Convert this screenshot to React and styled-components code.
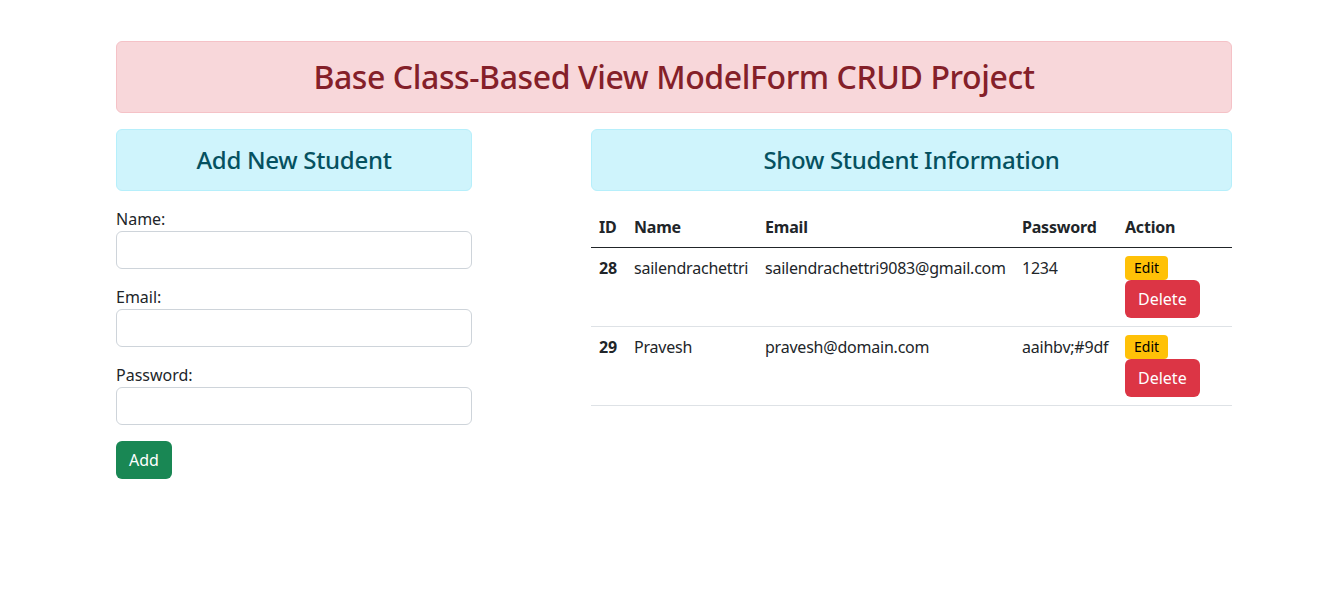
import React from "react";
import styled, { createGlobalStyle } from "styled-components";

const GlobalStyle = createGlobalStyle`
  * { box-sizing: border-box; }
  body {
    margin: 0;
    background: #fff;
    color: #212529;
    font-family: "Noto Sans", "Open Sans", sans-serif;
    font-size: 16px;
    line-height: 1.5;
  }
`;

const Container = styled.div`
  width: 1116px;
  margin: 41px 0 0 116px;
`;

const Alert = styled.div`
  padding: 16px;
  margin-bottom: 16px;
  border: 1px solid ${(p) => (p.$variant === "danger" ? "#f5c2c7" : "#b6effb")};
  border-radius: 6px;
  background: ${(p) => (p.$variant === "danger" ? "#f8d7da" : "#cff4fc")};
  color: ${(p) => (p.$variant === "danger" ? "#842029" : "#055160")};
  text-align: center;
`;

const Title = styled.h2`
  margin: 0;
  font-size: ${(p) => (p.$small ? "24px" : "32px")};
  line-height: ${(p) => (p.$small ? "28px" : "38px")};
  font-weight: 500;
  letter-spacing: ${(p) => (p.$small ? "-0.3px" : "-0.4px")};
`;

const Row = styled.div`
  display: grid;
  grid-template-columns: 356px 641px;
  column-gap: 119px;
  align-items: start;
`;

const Field = styled.div`
  margin-bottom: 16px;
`;

const Label = styled.label`
  display: block;
  font-size: 16px;
  line-height: 24px;
`;

const Input = styled.input`
  display: block;
  width: 100%;
  height: 38px;
  padding: 6px 12px;
  font: inherit;
  border: 1px solid #ced4da;
  border-radius: 6px;
  background: #fff;
`;

const Button = styled.button`
  display: block;
  font-family: inherit;
  border: 1px solid transparent;
  cursor: pointer;
  color: ${(p) => (p.$variant === "warning" ? "#000" : "#fff")};
  background: ${(p) =>
    p.$variant === "warning" ? "#ffc107" : p.$variant === "danger" ? "#dc3545" : "#198754"};
  font-size: ${(p) => (p.$small ? "14px" : "16px")};
  line-height: ${(p) => (p.$small ? "22px" : "24px")};
  padding: ${(p) => (p.$small ? "0 8px" : "6px 12px")};
  border-radius: ${(p) => (p.$small ? "4px" : "6px")};
`;

const Table = styled.table`
  width: 100%;
  border-collapse: collapse;
  table-layout: fixed;
`;

const Th = styled.th`
  text-align: left;
  font-weight: 700;
  padding: 8px;
  line-height: 24px;
  border-bottom: 1px solid #212529;
  white-space: nowrap;
  letter-spacing: -0.2px;
`;

const Td = styled.td`
  padding: 8px;
  line-height: 24px;
  vertical-align: top;
  border-bottom: 1px solid #dee2e6;
  font-weight: ${(p) => (p.$bold ? 700 : 400)};
  white-space: nowrap;
  letter-spacing: -0.22px;
`;

const students = [
  { id: 28, name: "sailendrachettri", email: "sailendrachettri9083@gmail.com", password: "1234" },
  { id: 29, name: "Pravesh", email: "pravesh@domain.com", password: "aaihbv;#9df" },
];

export default function App() {
  return (
    <>
      <GlobalStyle />
      <Container>
        <Alert $variant="danger">
          <Title>Base Class-Based View ModelForm CRUD Project</Title>
        </Alert>
        <Row>
          <div>
            <Alert $variant="info">
              <Title $small>Add New Student</Title>
            </Alert>
            <form onSubmit={(e) => e.preventDefault()}>
              <Field>
                <Label htmlFor="name">Name:</Label>
                <Input id="name" type="text" />
              </Field>
              <Field>
                <Label htmlFor="email">Email:</Label>
                <Input id="email" type="email" />
              </Field>
              <Field>
                <Label htmlFor="password">Password:</Label>
                <Input id="password" type="password" />
              </Field>
              <Button type="submit">Add</Button>
            </form>
          </div>
          <div>
            <Alert $variant="info">
              <Title $small>Show Student Information</Title>
            </Alert>
            <Table>
              <colgroup>
                <col style={{ width: 35 }} />
                <col style={{ width: 131 }} />
                <col style={{ width: 257 }} />
                <col style={{ width: 103 }} />
                <col />
              </colgroup>
              <thead>
                <tr>
                  <Th>ID</Th>
                  <Th>Name</Th>
                  <Th>Email</Th>
                  <Th>Password</Th>
                  <Th>Action</Th>
                </tr>
              </thead>
              <tbody>
                {students.map((s) => (
                  <tr key={s.id}>
                    <Td $bold>{s.id}</Td>
                    <Td>{s.name}</Td>
                    <Td>{s.email}</Td>
                    <Td>{s.password}</Td>
                    <Td>
                      <Button $variant="warning" $small>Edit</Button>
                      <Button $variant="danger">Delete</Button>
                    </Td>
                  </tr>
                ))}
              </tbody>
            </Table>
          </div>
        </Row>
      </Container>
    </>
  );
}
